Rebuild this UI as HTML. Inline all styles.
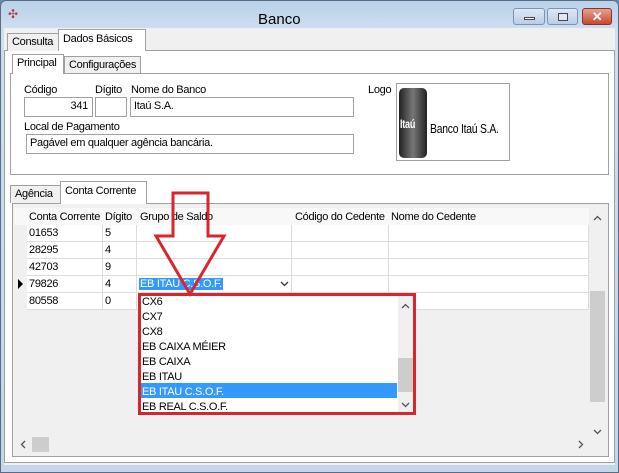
<!DOCTYPE html><html><head><meta charset="utf-8"><style>
*{margin:0;padding:0;box-sizing:border-box}
body{width:619px;height:473px;overflow:hidden;background:#6b8bb0;font-family:"Liberation Sans",sans-serif;font-size:11px;letter-spacing:-0.3px;color:#000;position:relative}
.a{position:absolute}
.t{position:absolute;white-space:nowrap;line-height:13px}
.box{position:absolute;background:#fff;border:1px solid #a0a0a0}
.tab{position:absolute;background:#f0f0f0;border:1px solid #a0a0a0;border-bottom:none;padding:2px 4px;white-space:nowrap}
.tab.s{background:#fff;}
.cell{position:absolute;border-right:1px solid #dcdcdc;border-bottom:1px solid #dcdcdc;background:#fff;padding-left:2px;line-height:16px;white-space:nowrap}
</style></head><body>
<div class="a" style="left:0;top:0;width:619px;height:473px;background:linear-gradient(#b9d1ea,#cfdff0 30px,#c3d6ea);border:1px solid #5a6c82;border-radius:6px 6px 0 0"></div>
<div class="t" style="left:258px;top:11px;font-size:15px;line-height:17px;letter-spacing:0">Banco</div>
<div class="a" style="left:8px;top:8px;width:12px;height:12px;color:#c03040;font-size:12px;line-height:12px">✣</div>
<div class="a" style="left:513px;top:8px;width:32px;height:17px;border:1px solid #7b93b5;border-radius:3px;background:linear-gradient(#dfe9f5,#b9cde6)"><div class="a" style="left:10px;top:8px;width:11px;height:3px;background:#fff;border:1px solid #445"></div></div>
<div class="a" style="left:547px;top:8px;width:31px;height:17px;border:1px solid #7b93b5;border-radius:3px;background:linear-gradient(#dfe9f5,#b9cde6)"><div class="a" style="left:10px;top:4px;width:10px;height:8px;border:1px solid #445;background:#dfe9f5"></div></div>
<div class="a" style="left:582px;top:8px;width:30px;height:17px;border:1px solid #8a3325;border-radius:3px;background:linear-gradient(#e8a08f,#c74a33);color:#fff;font-weight:bold;text-align:center;line-height:15px;font-size:13px">✕</div>
<div class="a" style="left:4px;top:28px;width:611px;height:437px;background:#f0f0f0"></div>
<div class="a" style="left:4px;top:50px;width:611px;height:413px;border:1px solid #a0a0a0;background:#fff"></div>
<div class="tab" style="left:7px;top:33px;width:52px;height:18px;">Consulta</div>
<div class="tab s" style="left:58px;top:29px;width:88px;height:22px;padding-top:3px">Dados Básicos</div>
<div class="a" style="left:10px;top:73px;width:599px;height:102px;border:1px solid #a0a0a0;background:#fff"></div>
<div class="tab s" style="left:12px;top:54px;width:52px;height:20px;background:#fff">Principal</div>
<div class="tab" style="left:64px;top:56px;width:77px;height:17px">Configurações</div>
<div class="t" style="left:24px;top:84px">Código</div>
<div class="t" style="left:95px;top:84px">Dígito</div>
<div class="t" style="left:131px;top:84px">Nome do Banco</div>
<div class="box" style="left:24px;top:97px;width:69px;height:20px;text-align:right;padding:2px 4px">341</div>
<div class="box" style="left:95px;top:97px;width:32px;height:20px"></div>
<div class="box" style="left:130px;top:97px;width:224px;height:20px;padding:2px 3px">Itaú S.A.</div>
<div class="t" style="left:24px;top:121px">Local de Pagamento</div>
<div class="box" style="left:26px;top:134px;width:328px;height:20px;padding:2px 3px">Pagável em qualquer agência bancária.</div>
<div class="t" style="left:368px;top:84px">Logo</div>
<div class="box" style="left:396px;top:83px;width:114px;height:78px"><div class="a" style="left:2px;top:4px;width:28px;height:70px;border-radius:5px;background:linear-gradient(90deg,#222,#777,#222)"><span class="t" style="left:1px;top:30px;color:#fff;font-size:12px;font-weight:bold;transform:scaleX(.75);transform-origin:left">Itaú</span></div><span class="t" style="left:33px;top:38px;font-size:13px;transform:scaleX(.8);transform-origin:left">Banco Itaú S.A.</span></div>
<div class="a" style="left:12px;top:203px;width:597px;height:254px;border:1px solid #a0a0a0;background:#f0f0f0"></div>
<div class="tab" style="left:10px;top:185px;width:51px;height:18px">Agência</div>
<div class="tab s" style="left:60px;top:181px;width:87px;height:23px;padding-top:3px">Conta Corrente</div>
<div class="a" style="left:14px;top:208px;width:575px;height:228px;background:#f0f0f0"></div>
<div class="a" style="left:14px;top:208px;width:575px;height:17px;background:#f8f8f8"></div>
<div class="t" style="left:29px;top:211px">Conta Corrente</div><div class="t" style="left:105px;top:211px">Dígito</div><div class="t" style="left:140px;top:211px">Grupo de Saldo</div><div class="t" style="left:295px;top:211px">Código do Cedente</div><div class="t" style="left:391px;top:211px">Nome do Cedente</div>
<div class="cell" style="left:27px;top:225px;width:76px;height:17px">01653</div><div class="cell" style="left:103px;top:225px;width:34px;height:17px">5</div><div class="cell" style="left:137px;top:225px;width:155px;height:17px"></div><div class="cell" style="left:292px;top:225px;width:97px;height:17px"></div><div class="cell" style="left:389px;top:225px;width:200px;height:17px"></div>
<div class="cell" style="left:27px;top:242px;width:76px;height:17px">28295</div><div class="cell" style="left:103px;top:242px;width:34px;height:17px">4</div><div class="cell" style="left:137px;top:242px;width:155px;height:17px"></div><div class="cell" style="left:292px;top:242px;width:97px;height:17px"></div><div class="cell" style="left:389px;top:242px;width:200px;height:17px"></div>
<div class="cell" style="left:27px;top:259px;width:76px;height:17px">42703</div><div class="cell" style="left:103px;top:259px;width:34px;height:17px">9</div><div class="cell" style="left:137px;top:259px;width:155px;height:17px"></div><div class="cell" style="left:292px;top:259px;width:97px;height:17px"></div><div class="cell" style="left:389px;top:259px;width:200px;height:17px"></div>
<div class="cell" style="left:27px;top:276px;width:76px;height:17px">79826</div><div class="cell" style="left:103px;top:276px;width:34px;height:17px">4</div><div class="cell" style="left:137px;top:276px;width:155px;height:17px"><span style="background:#3399ff;color:#fff;padding:0 1px">EB ITAU C.S.O.F.</span><svg class="a" style="left:143px;top:5px" width="9" height="6"><path d="M1 1L4.5 4.5L8 1" fill="none" stroke="#333" stroke-width="1.3"/></svg></div><div class="cell" style="left:292px;top:276px;width:97px;height:17px"></div><div class="cell" style="left:389px;top:276px;width:200px;height:17px"></div>
<div class="cell" style="left:27px;top:293px;width:76px;height:17px">80558</div><div class="cell" style="left:103px;top:293px;width:34px;height:17px">0</div><div class="cell" style="left:137px;top:293px;width:452px;height:17px"></div>
<div class="a" style="left:18px;top:279px;width:0;height:0;border-left:5px solid #000;border-top:5px solid transparent;border-bottom:5px solid transparent"></div>
<div class="a" style="left:589px;top:208px;width:17px;height:228px;background:#f0f0f0"></div>
<svg class="a" style="left:593px;top:215px" width="9" height="6"><path d="M1 5L4.5 1.5L8 5" fill="none" stroke="#555" stroke-width="1.3"/></svg>
<div class="a" style="left:590px;top:291px;width:15px;height:111px;background:#cdcdcd"></div>
<svg class="a" style="left:593px;top:429px" width="9" height="6"><path d="M1 1L4.5 4.5L8 1" fill="none" stroke="#555" stroke-width="1.3"/></svg>
<div class="a" style="left:14px;top:436px;width:592px;height:17px;background:#f0f0f0"></div>
<div class="a" style="left:32px;top:437px;width:17px;height:15px;background:#cdcdcd"></div>
<svg class="a" style="left:20px;top:440px" width="6" height="9"><path d="M5 1L1.5 4.5L5 8" fill="none" stroke="#555" stroke-width="1.3"/></svg>
<svg class="a" style="left:578px;top:440px" width="6" height="9"><path d="M1 1L4.5 4.5L1 8" fill="none" stroke="#555" stroke-width="1.3"/></svg>
<div class="a" style="left:138px;top:293px;width:278px;height:122px;border:3px solid #d8262f;background:#fff"></div>
<div class="a" style="left:141px;top:383px;width:256px;height:15px;background:#3399ff"></div>
<div class="t" style="left:142px;top:295px;line-height:15px">CX6<br>CX7<br>CX8<br>EB CAIXA MÉIER<br>EB CAIXA<br>EB ITAU<br><span style="color:#fff">EB ITAU C.S.O.F.</span><br>EB REAL C.S.O.F.</div>
<div class="a" style="left:398px;top:296px;width:15px;height:116px;background:#f0f0f0"></div>
<div class="a" style="left:398px;top:358px;width:15px;height:34px;background:#cdcdcd"></div>
<svg class="a" style="left:401px;top:303px" width="9" height="6"><path d="M1 5L4.5 1.5L8 5" fill="none" stroke="#555" stroke-width="1.3"/></svg>
<svg class="a" style="left:401px;top:402px" width="9" height="6"><path d="M1 1L4.5 4.5L8 1" fill="none" stroke="#555" stroke-width="1.3"/></svg>
<svg class="a" style="left:150px;top:190px" width="82" height="110"><path d="M23 3H58V46H74L40 104L6 46H23Z" fill="none" stroke="#d8262f" stroke-width="3"/></svg>
</body></html>
